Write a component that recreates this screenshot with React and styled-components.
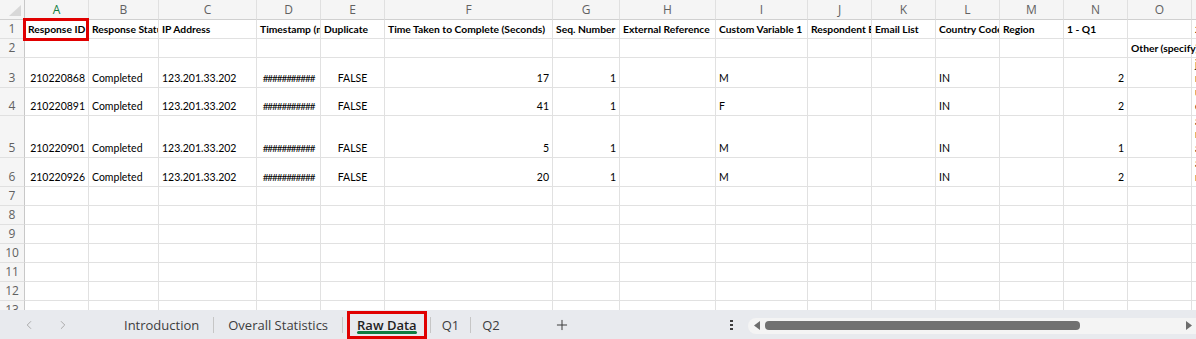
import React from 'react'
import styled, { createGlobalStyle } from 'styled-components'
import { ChevronLeft, ChevronRight, Plus } from 'lucide-react'

const GlobalStyle = createGlobalStyle`
  * { box-sizing: border-box; }
  body {
    margin: 0;
    overflow: hidden;
    background: #fff;
    font-family: Lato, 'Liberation Sans', sans-serif;
  }
`

const COLS = [
  { id: 'A', w: 64 }, { id: 'B', w: 70 }, { id: 'C', w: 98 }, { id: 'D', w: 64 },
  { id: 'E', w: 64 }, { id: 'F', w: 168 }, { id: 'G', w: 67 }, { id: 'H', w: 96 },
  { id: 'I', w: 92 }, { id: 'J', w: 64 }, { id: 'K', w: 64 }, { id: 'L', w: 64 },
  { id: 'M', w: 64 }, { id: 'N', w: 64 }, { id: 'O', w: 64 }, { id: 'P', w: 64 },
]

const HEIGHTS = [19, 19, 30, 28, 42, 29, 19, 19, 19, 19, 19, 19, 19]

const HEAD = {
  A: { t: 'Response ID', callout: true },
  B: { t: 'Response Status', clip: true },
  C: { t: 'IP Address' },
  D: { t: 'Timestamp (mm/dd/yyyy)', clip: true },
  E: { t: 'Duplicate' },
  F: { t: 'Time Taken to Complete (Seconds)' },
  G: { t: 'Seq. Number' },
  H: { t: 'External Reference' },
  I: { t: 'Custom Variable 1', clip: true },
  J: { t: 'Respondent Email', clip: true },
  K: { t: 'Email List' },
  L: { t: 'Country Code', clip: true },
  M: { t: 'Region' },
  N: { t: '1 - Q1' },
  P: { t: '2 - Q2', clip: true },
}

const RECORDS = [
  { id: '210220868', secs: '17', v: 'M', q1: '2', note: ['just', 'right'] },
  { id: '210220891', secs: '41', v: 'F', q1: '2', note: ['useful', 'easy'] },
  { id: '210220901', secs: '5', v: 'M', q1: '1', note: ['a', 'really', 'amazing'] },
  { id: '210220926', secs: '20', v: 'M', q1: '2', note: ['a', 'real'] },
]

const TABS = [
  { name: 'Introduction' },
  { name: 'Overall Statistics' },
  { name: 'Raw Data', active: true },
  { name: 'Q1', narrow: true },
  { name: 'Q2', narrow: true },
]

function rowCells(r) {
  if (r === 1) {
    const out = {}
    Object.keys(HEAD).forEach(k => { out[k] = { ...HEAD[k], bold: true } })
    return out
  }
  if (r === 2) return { O: { t: 'Other (specify)', bold: true } }
  const rec = RECORDS[r - 3]
  if (!rec) return {}
  return {
    A: { t: rec.id, align: 'right' },
    B: { t: 'Completed' },
    C: { t: '123.201.33.202' },
    D: { t: '###########', align: 'center', hash: true },
    E: { t: 'FALSE', align: 'center' },
    F: { t: rec.secs, align: 'right' },
    G: { t: '1', align: 'right' },
    I: { t: rec.v },
    L: { t: 'IN' },
    N: { t: rec.q1, align: 'right' },
    P: { lines: rec.note },
  }
}

const Page = styled.div`
  display: flex;
  flex-direction: column;
  width: 1196px;
  height: 339px;
  overflow: hidden;
`

const Sheet = styled.div`
  display: grid;
  grid-template-columns: 25px ${p => p.$cols};
  grid-template-rows: 20px ${p => p.$rows};
  height: 310px;
  width: 100%;
  overflow: hidden;
  background: #fff;
  flex-shrink: 0;
`

const Corner = styled.div`
  display: flex;
  align-items: flex-end;
  justify-content: flex-end;
  padding: 0 3px 3px 0;
  background: #f5f5f5;
  border-right: 1px solid #c8c8c8;
  border-bottom: 1px solid #d0d0d0;
`

const ColHead = styled.div`
  display: flex;
  align-items: center;
  justify-content: center;
  background: #f5f5f5;
  border-right: 1px solid #e0e0e0;
  border-bottom: 1px solid #d0d0d0;
  font: 400 12px/16px 'Open Sans', sans-serif;
  color: ${p => (p.$active ? '#107c41' : '#616161')};
`

const RowHead = styled.div`
  display: flex;
  align-items: flex-end;
  justify-content: center;
  padding-bottom: 1px;
  background: #f5f5f5;
  border-right: 1px solid #c8c8c8;
  border-bottom: 1px solid #e0e0e0;
  font: 400 12px/16px 'Open Sans', sans-serif;
  color: #616161;
`

const Cell = styled.div`
  position: relative;
  display: flex;
  align-items: flex-end;
  justify-content: ${p => (p.$align === 'right' ? 'flex-end' : p.$align === 'center' ? 'center' : 'flex-start')};
  min-width: 0;
  padding: 0 3px 2px;
  border-right: 1px solid #e1e1e1;
  border-bottom: 1px solid #e1e1e1;
  font: ${p => (p.$bold ? 700 : 400)} ${p => (p.$bold ? '10.3px' : '10.5px')}/13px Lato, sans-serif;
  color: #000;
  white-space: nowrap;
  overflow: ${p => (p.$clip ? 'hidden' : 'visible')};
`

const Hashes = styled.span`
  font-size: 10px;
  letter-spacing: -1.1px;
`

const WrapLines = styled.div`
  display: flex;
  flex-direction: column;
  justify-content: flex-end;
  height: 100%;
  line-height: 13.5px;
`

const Callout = styled.span`
  position: absolute;
  left: -2px;
  top: -2px;
  right: -1px;
  bottom: -3px;
  border: 3px solid #e00000;
  z-index: 2;
  pointer-events: none;
`

const TabBar = styled.div`
  display: flex;
  align-items: center;
  height: 29px;
  background: #e8eaee;
  font-family: 'Open Sans', sans-serif;
`

const Nav = styled.div`
  display: flex;
  align-items: center;
  gap: 20px;
  padding-left: 22px;
  margin-right: 40px;
  color: #a0a0a0;
`

const Tabs = styled.div`
  display: flex;
  align-items: center;
  align-self: stretch;
`

const Tab = styled.div`
  position: relative;
  display: flex;
  align-items: center;
  align-self: stretch;
  margin-top: 1px;
  padding: ${p => (p.$active ? '0 7px' : p.$narrow ? '0 11px' : '0 14px')};
  margin-left: ${p => (p.$active ? '4px' : '0')};
  margin-right: ${p => (p.$active ? '3px' : '0')};
  border: ${p => (p.$active ? '3px solid #e00000' : 'none')};
  font-size: 13px;
  font-weight: ${p => (p.$active ? 600 : 400)};
  color: ${p => (p.$active ? '#1f1f1f' : '#3d3d3d')};
  white-space: nowrap;
`

const Underline = styled.span`
  position: absolute;
  left: 7px;
  right: 7px;
  bottom: 2px;
  height: 3px;
  border-radius: 2px;
  background: #107c41;
`

const TabSep = styled.span`
  align-self: center;
  width: 1px;
  height: 16px;
  background: #c6c6c6;
`

const AddSheet = styled.div`
  display: flex;
  margin-left: 43px;
  color: #3d3d3d;
`

const Spacer = styled.div`
  flex: 1;
`

const MoreDots = styled.div`
  display: flex;
  flex-direction: column;
  gap: 2px;
  margin-right: 15px;
  span {
    width: 3px;
    height: 2px;
    background: #3d3d3d;
  }
`

const ScrollTrack = styled.div`
  display: flex;
  align-items: center;
  width: 448px;
  height: 16px;
  margin-top: 2px;
  padding: 0 4px 0 6px;
  border-radius: 8px 0 0 8px;
  background: #f4f4f4;
`

const ScrollThumb = styled.div`
  width: 315px;
  height: 9px;
  margin-left: 5px;
  border-radius: 4px;
  background: #717171;
`

const Arrow = ({ dir }) => (
  <svg width="6" height="9" viewBox="0 0 6 9">
    <path d={dir === 'left' ? 'M6 0L0 4.5L6 9Z' : 'M0 0L6 4.5L0 9Z'} fill="#6d6d6d" />
  </svg>
)

function renderCell(col, data, key) {
  if (!data) return <Cell key={key} />
  if (data.lines) {
    return (
      <Cell key={key} $clip>
        <WrapLines>{data.lines.map((l, i) => <div key={i}>{l}</div>)}</WrapLines>
      </Cell>
    )
  }
  return (
    <Cell key={key} $align={data.align} $bold={data.bold} $clip={data.clip || data.hash}>
      {data.hash ? <Hashes>{data.t}</Hashes> : data.t}
      {data.callout && <Callout />}
    </Cell>
  )
}

export default function App() {
  const cols = COLS.map(c => c.w + 'px').join(' ')
  const rows = HEIGHTS.map(h => h + 'px').join(' ')

  return (
    <Page>
      <GlobalStyle />
      <Sheet $cols={cols} $rows={rows}>
        <Corner>
          <svg width="12" height="11" viewBox="0 0 12 11">
            <path d="M12 0V11H0Z" fill="#d8d8d8" />
          </svg>
        </Corner>
        {COLS.map(c => (
          <ColHead key={c.id} $active={c.id === 'A'}>{c.id}</ColHead>
        ))}
        {HEIGHTS.map((h, i) => {
          const r = i + 1
          const cells = rowCells(r)
          return (
            <React.Fragment key={r}>
              <RowHead>{r}</RowHead>
              {COLS.map(c => renderCell(c, cells[c.id], r + c.id))}
            </React.Fragment>
          )
        })}
      </Sheet>
      <TabBar>
        <Nav>
          <ChevronLeft size={14} strokeWidth={1.5} />
          <ChevronRight size={14} strokeWidth={1.5} />
        </Nav>
        <Tabs>
          {TABS.map((t, i) => (
            <React.Fragment key={t.name}>
              {i > 0 && <TabSep />}
              <Tab $active={t.active} $narrow={t.narrow}>
                {t.name}
                {t.active && <Underline />}
              </Tab>
            </React.Fragment>
          ))}
        </Tabs>
        <AddSheet>
          <Plus size={16} strokeWidth={1.5} />
        </AddSheet>
        <Spacer />
        <MoreDots>
          <span />
          <span />
          <span />
        </MoreDots>
        <ScrollTrack>
          <Arrow dir="left" />
          <ScrollThumb />
          <Spacer />
          <Arrow dir="right" />
        </ScrollTrack>
      </TabBar>
    </Page>
  )
}
